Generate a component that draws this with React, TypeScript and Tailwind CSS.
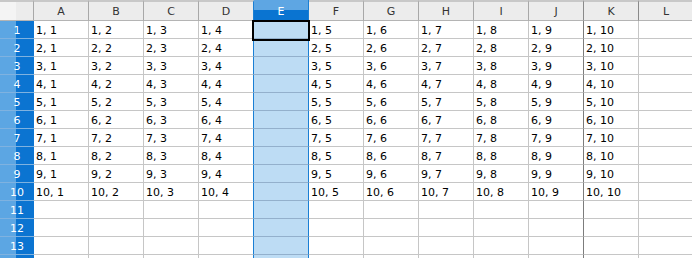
import React from 'react';

const cols = ['A', 'B', 'C', 'D', 'E', 'F', 'G', 'H', 'I', 'J', 'K', 'L'];
const rows = Array.from({ length: 14 }, (_, i) => i + 1);

// value for a cell; column E is the inserted empty column
const cellText = (r: number, c: number) => {
  if (r > 10 || c === 4 || c === 11) return '';
  const n = c < 4 ? c + 1 : c;
  return `${r}, ${n}`;
};

const App: React.FC = () => {
  return (
    <div
      className="relative w-[692px] h-[258px] overflow-hidden bg-white text-[11px] leading-none"
      style={{ fontFamily: '"DejaVu Sans", Verdana, sans-serif' }}
    >
      {/* column header row */}
      <div className="flex h-[21px]">
        <div className="w-[34px] shrink-0 border-r border-b border-t-2 border-t-[#c8c8c8] border-r-[#a8a8a8] border-b-[#b4b4b4] bg-[linear-gradient(to_right,#f4f4f4_50%,#ececec_50%)]" />
        {cols.map((c, i) =>
          i === 4 ? (
            <div
              key={c}
              className="w-[55px] shrink-0 flex items-center justify-center border-r border-r-[#1a7fd4] bg-[linear-gradient(to_bottom,#5ea6e3_50%,#0a74d1_50%)] text-white pt-[2px]"
            >
              {c}
            </div>
          ) : (
            <div
              key={c}
              className={`w-[55px] shrink-0 flex items-center justify-center border-r border-b border-t-2 border-t-[#c8c8c8] border-b-[#b4b4b4] bg-[#ececec] text-[#333] ${
                i === 3 ? 'border-r-[#1a7fd4]' : i >= 9 ? 'border-r-[#8a8a8a]' : 'border-r-[#a8a8a8]'
              }`}
            >
              {c}
            </div>
          )
        )}
      </div>

      {rows.map((r) => (
        <div key={r} className="flex h-[18px]">
          <div className="w-[34px] shrink-0 flex items-center justify-center border-b border-b-[#7fb2e0] bg-[linear-gradient(to_right,#5ca6e3_16px,#0b74d1_16px)] text-white pt-[1px]">
            {r < 14 ? r : ''}
          </div>
          {cols.map((c, i) => {
            const sel = i === 4;
            let cls = 'border-b-[#c6c6c6] border-r-[#c6c6c6]';
            if (sel) cls = 'bg-[#bddcf4] border-b-[#93b0cc] border-r-[#1a7fd4]';
            else if (i === 3) cls = 'border-b-[#c6c6c6] border-r-[#1a7fd4]';
            else if (i === 9) cls = 'border-b-[#c6c6c6] border-r-[#7c7c7c]';
            return (
              <div
                key={c}
                className={`w-[55px] shrink-0 flex items-center pl-[2px] pt-[2px] border-r border-b text-black ${cls}`}
              >
                {cellText(r, i)}
              </div>
            );
          })}
        </div>
      ))}

      {/* cursor on E1 */}
      <div className="absolute left-[252px] top-[20px] w-[58px] h-[21px] border-[2.5px] border-black" />
    </div>
  );
};

export default App;
